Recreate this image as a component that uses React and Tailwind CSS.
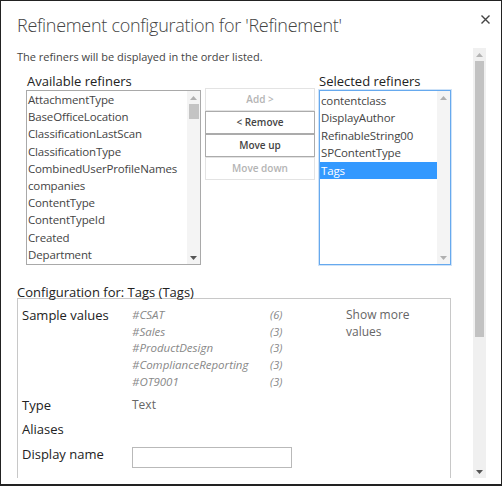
import React from "react";

const available = [
  "AttachmentType",
  "BaseOfficeLocation",
  "ClassificationLastScan",
  "ClassificationType",
  "CombinedUserProfileNames",
  "companies",
  "ContentType",
  "ContentTypeId",
  "Created",
  "Department",
];

const selected = ["contentclass", "DisplayAuthor", "RefinableString00", "SPContentType", "Tags"];

const samples = [
  ["#CSAT", "(6)"],
  ["#Sales", "(3)"],
  ["#ProductDesign", "(3)"],
  ["#ComplianceReporting", "(3)"],
  ["#OT9001", "(3)"],
];

function Arrow({ down, color = "#9a9a9a" }) {
  return (
    <svg width="7" height="4" viewBox="0 0 7 4">
      <path d={down ? "M0 0 L7 0 L3.5 4 Z" : "M0 4 L7 4 L3.5 0 Z"} fill={color} />
    </svg>
  );
}

function ListScroll({ thumb }) {
  return (
    <div className="flex w-[13px] flex-col items-center bg-[#f4f4f4]">
      <div className="flex h-[13px] items-center justify-center">
        <Arrow color="#b0b0b0" />
      </div>
      {thumb && <div className="h-[15px] w-[10px] bg-[#c4c4c4]" />}
      <div className="flex-1" />
      <div className="flex h-[13px] items-center justify-center">
        <Arrow down color={thumb ? "#555" : "#b0b0b0"} />
      </div>
    </div>
  );
}

function Btn({ label, disabled }) {
  return (
    <div
      className={`flex h-[23px] items-center justify-center border bg-white text-[10px] font-semibold ${
        disabled ? "border-[#e3e3e3] text-[#b4b4b4]" : "border-[#ababab] text-[#444]"
      }`}
    >
      {label}
    </div>
  );
}

export default function App() {
  return (
    <div className="relative flex h-[486px] w-[502px] flex-col overflow-hidden border border-b-2 border-[#222] bg-white font-['Open_Sans',sans-serif] text-[#444]">
      <div className="relative h-[47px] shrink-0">
        <h1 className="pl-[16px] pt-[10px] text-[18px] font-light leading-[28px] tracking-[-0.3px] text-[#444]">
          Refinement configuration for 'Refinement'
        </h1>
        <svg className="absolute right-[11px] top-[14px]" width="9" height="9" viewBox="0 0 9 9">
          <path d="M0.5 0.5 L8.5 8.5 M8.5 0.5 L0.5 8.5" stroke="#444" strokeWidth="1.4" />
        </svg>
      </div>

      <div className="flex min-h-0 flex-1 pb-[6px]">
        <div className="w-[472px] overflow-hidden pl-[16px]">
          <p className="mt-[2px] text-[11px] leading-[14px] text-[#444]">
            The refiners will be displayed in the order listed.
          </p>

          <div className="mt-[9px] flex">
            <div className="ml-[9px] w-[175px]">
              <div className="h-[17px] pl-[1px] text-[13px] font-medium leading-[16px] text-[#222]">Available refiners</div>
              <div className="flex h-[175px] border border-[#a9a9a9]">
                <div className="flex-1 overflow-hidden pl-[1px]">
                  {available.map((item) => (
                    <div key={item} className="h-[17.2px] whitespace-nowrap text-[11.5px] leading-[17.4px] tracking-[-0.15px] text-[#444]">
                      {item}
                    </div>
                  ))}
                </div>
                <ListScroll thumb />
              </div>
            </div>

            <div className="ml-[4px] w-[110px] pt-[15px]">
              <Btn label="Add >" disabled />
              <Btn label="< Remove" />
              <Btn label="Move up" />
              <Btn label="Move down" disabled />
            </div>

            <div className="ml-[4px] w-[132px]">
              <div className="h-[17px] text-[13px] font-medium leading-[16px] text-[#222]">Selected refiners</div>
              <div className="flex h-[175px] border border-[#66a9ee] shadow-[0_0_0_1px_#cfe3f8]">
                <div className="flex-1 overflow-hidden pt-[1px]">
                  {selected.map((item) => (
                    <div
                      key={item}
                      className={`h-[17.4px] whitespace-nowrap pl-[1px] text-[11.5px] leading-[17.4px] tracking-[-0.15px] ${
                        item === "Tags" ? "bg-[#3399ff] text-white" : "text-[#444]"
                      }`}
                    >
                      {item}
                    </div>
                  ))}
                </div>
                <ListScroll />
              </div>
            </div>
          </div>

          <div className="mt-[20px] text-[13px] leading-[14px] text-[#222]">Configuration for: Tags (Tags)</div>
          <div className="mt-[-1px] h-[200px] w-[434px] border border-b-0 border-[#c8c8c8] pl-[4px] pt-[8px] text-[13px]">
            <div className="flex">
              <div className="w-[110px] leading-[16.7px] text-[#222]">Sample values</div>
              <div className="w-[138px]">
                {samples.map(([v]) => (
                  <div key={v} className="text-[11.5px] italic leading-[16.7px] text-[#888]">{v}</div>
                ))}
              </div>
              <div className="w-[76px]">
                {samples.map(([v, c]) => (
                  <div key={v} className="text-[11px] italic leading-[16.7px] text-[#888]">{c}</div>
                ))}
              </div>
              <div className="w-[70px] text-[12px] leading-[16.7px] text-[#666]">Show more values</div>
            </div>
            <div className="mt-[6px] flex leading-[16px]">
              <div className="w-[110px] text-[#222]">Type</div>
              <div className="text-[12px] text-[#666]">Text</div>
            </div>
            <div className="mt-[8px] leading-[16px] text-[#222]">Aliases</div>
            <div className="mt-[9px] flex">
              <div className="w-[110px] leading-[16px] text-[#222]">Display name</div>
              <div className="mt-[1px] h-[21px] w-[160px] border border-[#b9b9b9] bg-white" />
            </div>
          </div>
        </div>

        <div className="flex w-[13px] flex-col items-center bg-[#f0f0f0]">
          <div className="flex h-[13px] items-center justify-center">
            <Arrow color="#b4b4b4" />
          </div>
          <div className="h-[276px] w-[9px] bg-[#c2c2c2]" />
          <div className="flex-1" />
          <div className="flex h-[13px] items-center justify-center">
            <Arrow down color="#555" />
          </div>
        </div>
      </div>
    </div>
  );
}
